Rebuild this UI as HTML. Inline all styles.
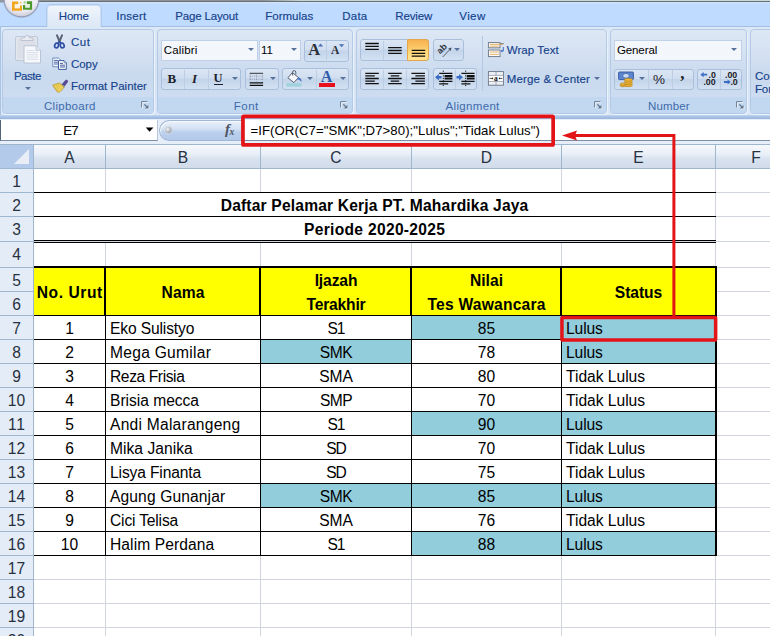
<!DOCTYPE html>
<html lang="id">
<head>
<meta charset="utf-8">
<title>Excel - Daftar Pelamar Kerja</title>
<style>
*{box-sizing:border-box;margin:0;padding:0}
html,body{width:770px;height:636px;overflow:hidden;background:#fff}
body{position:relative;font-family:"Liberation Sans",sans-serif;color:#000}
.abs{position:absolute}
#tabs{left:0;top:0;width:770px;height:27px;background:#bfdbff}
#titleline{left:36px;top:0;width:734px;height:2.4px;background:linear-gradient(rgba(0,0,0,0) 0,rgba(0,0,0,0) 60%,#66717e 72%,#66717e 100%),linear-gradient(90deg,#8f9395 0,#8f9395 31%,#c3d6cf 36%,#c9dbd3 100%)}
#titleline2{left:36px;top:2.3px;width:734px;height:2px;background:linear-gradient(#d6e5f8,#c5dcfb)}
.tab,.t,.gl,.ct{position:absolute;z-index:3;font-size:11.5px;line-height:14px;color:#15428b;white-space:nowrap}
.t,.tab{-webkit-text-stroke:0.15px #15428b}
.gl{color:#3e6aaa}
.ct{color:#000}
#hometab{left:47px;top:4.5px;width:54px;height:23px;border:1px solid #cfdff3;border-bottom:none;border-radius:4px 4px 0 0;background:linear-gradient(#eff5fc,#e2ecf8 60%,#dde8f6);z-index:2;box-shadow:0 0 0 1px rgba(160,188,225,.55);clip-path:inset(-2px -2px 0.5px -2px)}
#ribbon{left:0;top:26px;width:770px;height:90px;background:linear-gradient(#dde8f6 0,#d6e3f3 50%,#d9e6f6 100%);border-top:1px solid #a3bfe2;border-left:1px solid #a8c3e4}
#ribbonbot{left:0;top:115px;width:770px;height:4.5px;background:linear-gradient(#c3d7f0 0,#a9c3e5 35%,#93b0d9 100%)}
.grp{position:absolute;top:29px;height:85px;border:1px solid #b3c9e6;border-radius:4px;background:linear-gradient(#dde7f5 0,#d6e2f2 25%,#c9d9ee 55%,#cddcf0 80%);overflow:hidden;box-shadow:1px 1px 0 #eaf2fb}
.grp .lbl{position:absolute;left:0;right:0;bottom:0;height:16px;background:#c2d8f0;font-size:11.5px;line-height:18px;color:#3e6aaa;text-align:center;white-space:nowrap}
.btng{position:absolute;height:22px;border:1px solid #a9bfdc;border-radius:3px;background:linear-gradient(#dbe6f4 0,#d0def0 45%,#c3d4ea 50%,#d3e1f2 100%)}
.combo{position:absolute;height:21px;border:1px solid #bfd1e8;background:#f3f7fc;font-size:11.5px;line-height:19px;color:#000;white-space:nowrap}
.dd{position:absolute;width:0;height:0;border-left:3px solid transparent;border-right:3px solid transparent;border-top:3px solid #56729a}
.launch{position:absolute;width:8px;height:8px}
#fbar{left:0;top:119px;width:770px;height:26px;background:#e6eefa}
#namebox{left:0;top:119.5px;width:158px;height:21px;background:#fff;border-bottom:1px solid #7f8da3;border-right:1px solid #b7c6da;border-left:1px solid #55627a}
#finput{left:241px;top:119.5px;width:529px;height:21px;background:#fff;border-bottom:1px solid #7f8da3}
.cell{position:absolute;white-space:nowrap;font-size:15.6px;line-height:24px;color:#000}
.hd{position:absolute;font-size:15.6px;color:#25313f;text-align:center;white-space:nowrap}
.b{font-weight:bold}
</style>
</head>
<body>
<!-- ===== tab row ===== -->
<div id="tabs" class="abs"></div>
<div id="titleline" class="abs"></div>
<div id="titleline2" class="abs"></div>
<div id="hometab" class="abs"></div>
<div class="tab" style="left:58.8px;top:9px;letter-spacing:-0.20px">Home</div>
<div class="tab" style="left:116.2px;top:9px;letter-spacing:0.25px">Insert</div>
<div class="tab" style="left:175.3px;top:9px;letter-spacing:-0.17px">Page Layout</div>
<div class="tab" style="left:265.3px;top:9px;letter-spacing:-0.01px">Formulas</div>
<div class="tab" style="left:342.3px;top:9px;letter-spacing:0.20px">Data</div>
<div class="tab" style="left:395.3px;top:9px;letter-spacing:-0.16px">Review</div>
<div class="tab" style="left:459.3px;top:9px;letter-spacing:0.39px">View</div>
<!-- office button -->
<svg class="abs" style="left:0;top:0" width="44" height="22" viewBox="0 0 44 22">
 <defs>
  <radialGradient id="ob" cx="50%" cy="35%" r="65%"><stop offset="0" stop-color="#ffffff"/><stop offset="0.75" stop-color="#eceaf3"/><stop offset="1" stop-color="#c9cad9"/></radialGradient>
 </defs>
 <rect x="0" y="0" width="5" height="2.5" fill="#8f979f"/>
 <circle cx="21.4" cy="-0.5" r="18.3" fill="#8e9ab3" opacity="0.5"/>
 <circle cx="21.4" cy="-0.5" r="17.3" fill="url(#ob)" stroke="#8b94aa" stroke-width="0.9"/>
 <path d="M12 1.6h6.2v2.6h-3.4v4h5v-2.6h2.2v5.1h-10z" fill="#f3a51c"/>
 <rect x="14.8" y="4.2" width="5" height="4" fill="#fdf3dc"/>
 <circle cx="20.6" cy="2.6" r="1.1" fill="#f8cf7a"/>
 <path d="M26.8 1.3h5.3v8.4h-9.1v-4.6h2.4v2.4h4.3v-3.6h-2.9z" fill="#4c9a2c"/>
 <rect x="25.4" y="4" width="4.3" height="3.5" fill="#e6f3dc"/>
 <circle cx="24.6" cy="2.4" r="1.1" fill="#9bd077"/>
</svg>

<!-- ===== ribbon ===== -->
<div id="ribbon" class="abs"></div>
<div id="ribbonbot" class="abs"></div>

<!-- Clipboard group -->
<div class="grp" style="left:2px;width:152px"><div class="lbl"></div></div>
<!-- Font group -->
<div class="grp" style="left:157px;width:196px"><div class="lbl"></div></div>
<!-- Alignment group -->
<div class="grp" style="left:356px;width:251px"><div class="lbl"></div></div>
<!-- Number group -->
<div class="grp" style="left:610px;width:137px"><div class="lbl"></div></div>
<!-- next group -->
<div class="grp" style="left:750px;width:40px"><div class="lbl"></div></div>


<div class="gl" style="left:44.0px;top:98.6px;letter-spacing:0.28px">Clipboard</div>
<div class="gl" style="left:233.8px;top:98.6px;letter-spacing:0.49px">Font</div>
<div class="gl" style="left:445.6px;top:98.6px;letter-spacing:0.32px">Alignment</div>
<div class="gl" style="left:647.9px;top:98.6px;letter-spacing:0.18px">Number</div>
<!-- ===== Clipboard content ===== -->
<svg class="abs" style="left:13px;top:33px" width="30" height="32" viewBox="13 33 30 32">
 <rect x="15.5" y="36.5" width="22" height="24" rx="1.5" fill="#e3e6ed" stroke="#c0c9d8"/>
 <rect x="17.5" y="38.8" width="18" height="19.7" fill="#dcdfe7"/>
 <path d="M21 40.5v-2.5h3.5a2.5 2.5 0 0 1 5 0h3.5v2.5z" fill="#e9ecf2" stroke="#b3bccb" stroke-width="0.8"/>
 <path d="M24 45.8h12l4.5 4.5v12.7h-16.5z" fill="#f6f8fb" stroke="#b4bfd0" stroke-width="0.9"/>
 <path d="M36 45.8v4.5h4.5" fill="#e3e8f0" stroke="#b4bfd0" stroke-width="0.8"/>
 <g stroke="#d5dbe5" stroke-width="0.9"><path d="M26.5 50.5h8M26.5 52.7h11.5M26.5 54.9h11.5M26.5 57.1h11.5M26.5 59.3h11.5"/></g>
</svg>
<div class="t" style="left:13.9px;top:69px;letter-spacing:-0.46px">Paste</div>
<div class="dd" style="left:24.5px;top:87px"></div>
<!-- cut -->
<svg class="abs" style="left:52px;top:34px" width="16" height="16" viewBox="52 34 16 16">
 <path d="M57 35.3l3 7.2M62 35.3l-3 7.2" stroke="#5a6374" stroke-width="2" stroke-linecap="round" fill="none"/>
 <path d="M59.2 41.4l-1.7 2.2M59.6 41.4l1.7 2.2" stroke="#3553a8" stroke-width="1.7" fill="none"/>
 <ellipse cx="56.6" cy="45.5" rx="1.9" ry="2.4" transform="rotate(20 56.6 45.5)" fill="none" stroke="#2f4ea6" stroke-width="1.7"/>
 <ellipse cx="62.2" cy="45.5" rx="1.9" ry="2.4" transform="rotate(-20 62.2 45.5)" fill="none" stroke="#2f4ea6" stroke-width="1.7"/>
</svg>
<div class="t" style="left:70.9px;top:35px;letter-spacing:0.60px">Cut</div>
<!-- copy -->
<svg class="abs" style="left:51px;top:56px" width="17" height="15" viewBox="51 56 17 15">
 <path d="M52.8 58h5.7l2 2v6.7h-7.7z" fill="#fbfcfe" stroke="#5f7fb5" stroke-width="0.9"/>
 <g stroke="#3a559a" stroke-width="0.9"><path d="M54 60.4h4M54 62.2h4.2M54 64h4.2"/></g>
 <path d="M58.5 60.6h5.6l2.2 2.2v6.6h-7.8z" fill="#fbfcfe" stroke="#3d5f9f" stroke-width="1"/>
 <path d="M64.1 60.6v2.2h2.2" fill="#dfe7f4" stroke="#3d5f9f" stroke-width="0.7"/>
 <g stroke="#2f4a8f" stroke-width="0.9"><path d="M60 63.4h3M60 65.2h5M60 67h5"/></g>
</svg>
<div class="t" style="left:70.9px;top:57px;letter-spacing:0.01px">Copy</div>
<!-- format painter -->
<svg class="abs" style="left:51px;top:78px" width="18" height="16" viewBox="51 78 18 16">
 <path d="M62.2 84.2l3.3-3.8a1.3 1.3 0 0 1 2 1.6l-3 4z" fill="#5b4a9b" stroke="#3d3272" stroke-width="0.6"/>
 <path d="M61 83.6l4 3.2-1.2 1.5-4-3.2z" fill="#8a8f9c"/>
 <path d="M52.6 85.2l6.8-2.2 4.6 4.2-2.8 3.4c-1 1.2-2.4 2-3.8 1.4z" fill="#f1d45d" stroke="#b5932a" stroke-width="0.8"/>
 <path d="M53.5 85.5l4.2 5.6M55.6 84.7l3.6 5.4M57.7 84l2.8 4.6" stroke="#c9a93a" stroke-width="0.6"/>
</svg>
<div class="t" style="left:70.9px;top:79px;letter-spacing:-0.00px">Format Painter</div>
<svg class="launch" style="left:140.5px;top:100.5px;width:9px;height:9px" viewBox="0 0 9 9"><path d="M1.5 7V1.5H7" fill="none" stroke="#f2f7fc" stroke-width="1"/><path d="M0.6 6.4V0.6H6.4" fill="none" stroke="#6b7d93" stroke-width="1"/><path d="M4.3 8.2H8.2V4.3z" fill="#f2f7fc"/><path d="M3.4 3.4L6.6 6.6" stroke="#5f7186" stroke-width="1.3"/><path d="M3.9 7.5H7.5V3.9z" fill="#5f7186"/></svg>


<!-- ===== Font group content ===== -->
<div class="combo" style="left:161px;top:39.5px;width:96.5px"></div>
<div class="ct" style="left:163.7px;top:43px;letter-spacing:0.17px">Calibri</div>
<div class="dd" style="left:247.5px;top:48px"></div>
<div class="combo" style="left:258.5px;top:39.5px;width:42.5px"></div>
<div class="ct" style="left:260.9px;top:43px;letter-spacing:0.15px">11</div>
<div class="dd" style="left:290.5px;top:48px"></div>
<div class="btng" style="left:304px;top:39.5px;width:44.5px"></div>
<div class="abs" style="left:326px;top:41px;width:1px;height:19px;background:#bccde4"></div>
<div class="abs" style="left:308.3px;top:40.6px;font:bold 16.5px/17px 'Liberation Serif',serif;color:#2a2f38">A</div>
<div class="abs" style="left:331px;top:44.2px;font:bold 11.5px/13px 'Liberation Serif',serif;color:#2a2f38">A</div>
<svg class="abs" style="left:318px;top:42.5px" width="6" height="4"><polygon points="0,3.4 2.6,0.4 5.2,3.4" fill="#4b6fb0"/></svg>
<svg class="abs" style="left:339px;top:43.5px" width="6" height="4"><polygon points="0,0.3 5.2,0.3 2.6,3.3" fill="#4b6fb0"/></svg>

<div class="btng" style="left:161px;top:68px;width:80px"></div>
<div class="abs" style="left:183.5px;top:69.5px;width:1px;height:19px;background:#bccde4"></div>
<div class="abs" style="left:207.5px;top:69.5px;width:1px;height:19px;background:#bccde4"></div>
<div class="abs" style="left:167.5px;top:70px;font:bold 13px/17px 'Liberation Serif',serif;color:#1d2129">B</div>
<div class="abs" style="left:192px;top:70px;font:italic bold 13px/17px 'Liberation Serif',serif;color:#1d2129">I</div>
<div class="abs" style="left:213.5px;top:70px;font:bold 12.5px/17px 'Liberation Serif',serif;color:#1d2129;border-bottom:1.3px solid #1d2129;height:15.2px">U</div>
<div class="dd" style="left:231.5px;top:77px"></div>

<div class="btng" style="left:244.5px;top:68px;width:34.5px"></div>
<svg class="abs" style="left:249px;top:72px" width="15" height="15" viewBox="0 0 15 15">
 <path d="M0.7 1.3h13.4" stroke="#30343c" stroke-width="1"/>
 <g stroke="#8b93a3" stroke-width="0.9" stroke-dasharray="1 1.2"><path d="M0.7 4.2h13.4M0.7 7.2h13.4M1.2 2.5v7M7.4 2.5v7M13.6 2.5v7"/></g>
 <path d="M0.7 10.9h13.4M0.7 13.3h13.4" stroke="#111" stroke-width="1.3"/>
</svg>
<div class="dd" style="left:269.5px;top:77px"></div>

<div class="btng" style="left:282px;top:68px;width:66.5px"></div>
<div class="abs" style="left:315.5px;top:69.5px;width:1px;height:19px;background:#bccde4"></div>
<svg class="abs" style="left:285px;top:69px" width="20" height="19" viewBox="285 69 20 19">
 <rect x="286.3" y="83.2" width="15.2" height="3.4" fill="#9ed3dd"/>
 <path d="M292.3 72.6l6.2 5-4.6 5-6-4.8z" fill="#f4f6fa" stroke="#4a5568" stroke-width="0.9"/>
 <path d="M292.6 75.5v-3.3a1.6 1.6 0 0 1 3.2 0v2.2" fill="none" stroke="#4a5568" stroke-width="0.9"/>
 <path d="M298.3 77.4c2.2 0.2 3.3 1.8 3.2 4.6-1.4-1.6-2.2-2.6-4.6-2.8z" fill="#3f6fc0"/>
</svg>
<div class="dd" style="left:306.5px;top:77px"></div>
<div class="abs" style="left:320.7px;top:67.5px;font:bold 16px/17px 'Liberation Serif',serif;color:#2d5aa8">A</div>
<div class="abs" style="left:319px;top:83.2px;width:16px;height:3.4px;background:#e8101c"></div>
<div class="dd" style="left:339.5px;top:77px"></div>
<svg class="launch" style="left:339.5px;top:100.5px;width:9px;height:9px" viewBox="0 0 9 9"><path d="M1.5 7V1.5H7" fill="none" stroke="#f2f7fc" stroke-width="1"/><path d="M0.6 6.4V0.6H6.4" fill="none" stroke="#6b7d93" stroke-width="1"/><path d="M4.3 8.2H8.2V4.3z" fill="#f2f7fc"/><path d="M3.4 3.4L6.6 6.6" stroke="#5f7186" stroke-width="1.3"/><path d="M3.9 7.5H7.5V3.9z" fill="#5f7186"/></svg>


<!-- ===== Alignment group content ===== -->
<div class="btng" style="left:360px;top:39px;width:69px"></div>
<div class="abs" style="left:406.5px;top:39px;width:22.5px;height:22px;border:1px solid #e3a64b;border-radius:0 3px 3px 0;background:linear-gradient(#f7b250 0,#fbc566 35%,#ffd977 60%,#ffe594 100%)"></div>
<div class="abs" style="left:383px;top:40.5px;width:1px;height:19px;background:#bccde4"></div>
<div class="btng" style="left:432.5px;top:39px;width:31.5px"></div>
<div class="btng" style="left:360px;top:68px;width:69px"></div>
<div class="abs" style="left:383px;top:69.5px;width:1px;height:19px;background:#bccde4"></div>
<div class="abs" style="left:406px;top:69.5px;width:1px;height:19px;background:#bccde4"></div>
<div class="btng" style="left:432.5px;top:68px;width:44px"></div>
<div class="abs" style="left:454.5px;top:69.5px;width:1px;height:19px;background:#bccde4"></div>
<div class="abs" style="left:481.5px;top:36px;width:1px;height:55px;background:#b4c8e3"></div>
<svg class="abs" style="left:356px;top:34px" width="126" height="60" viewBox="356 34 126 60">
 <path d="M365.3 43.5h13.5M365.3 46.4h13.5M365.3 49.3h13.5" stroke="#111" stroke-width="1.3" fill="none"/>
 <path d="M388.2 47.6h13.5M388.2 50.5h13.5M388.2 53.4h13.5" stroke="#111" stroke-width="1.3" fill="none"/>
 <path d="M411.7 50.4h13.5M411.7 53.3h13.5M411.7 56.2h13.5" stroke="#111" stroke-width="1.3" fill="none"/>
 <path d="M365.3 73.3h13.5M365.3 75.9h9.5M365.3 78.5h13.5M365.3 81.1h9.5M365.3 83.7h13.5" stroke="#111" stroke-width="1.3" fill="none"/>
 <path d="M388.2 73.3h13.5M390.7 75.9h8.5M388.2 78.5h13.5M390.7 81.1h8.5M388.2 83.7h13.5" stroke="#111" stroke-width="1.3" fill="none"/>
 <path d="M411.4 73.3h13.5M415.4 75.9h9.5M411.4 78.5h13.5M415.4 81.1h9.5M411.4 83.7h13.5" stroke="#111" stroke-width="1.3" fill="none"/>
 <!-- orientation -->
 <g transform="translate(440.2 54.6) rotate(-45)"><text x="0" y="0" font-family="Liberation Sans,sans-serif" font-size="9" font-weight="bold" fill="#30343c">ab</text></g>
 <path d="M442.7 57l8-8.4" stroke="#4a5260" stroke-width="0.9" fill="none"/>
 <path d="M451.6 47.6l-3.4 0.9 2.4 2.5z" fill="#4a5260"/>
 <!-- decrease indent -->
 <path d="M439.2 73.3h13.2M439.2 81.3h13.2M439.2 83.9h9" stroke="#111" stroke-width="1.3" fill="none"/>
 <path d="M444.6 76h7.8M444.6 78.5h7.8" stroke="#111" stroke-width="1.9" fill="none"/>
 <path d="M443.3 70.6v15.4" stroke="#111" stroke-width="1" stroke-dasharray="1.2 1.2"/>
 <path d="M435 77.3l3.9-3.3v2.1h2.6v2.4h-2.6v2.1z" fill="#3b6cc4"/>
 <!-- increase indent -->
 <path d="M461.4 73.3h13.2M461.4 81.3h13.2M461.4 83.9h9" stroke="#111" stroke-width="1.3" fill="none"/>
 <path d="M466.8 76h7.8M466.8 78.5h7.8" stroke="#111" stroke-width="1.9" fill="none"/>
 <path d="M465.7 70.6v15.4" stroke="#111" stroke-width="1" stroke-dasharray="1.2 1.2"/>
 <path d="M463 77.3l-3.9-3.3v2.1h-2.6v2.4h2.6v2.1z" fill="#3b6cc4"/>
</svg>
<div class="dd" style="left:453.7px;top:48.3px"></div>
<!-- wrap text -->
<svg class="abs" style="left:487px;top:41px" width="18" height="17" viewBox="487 41 18 17">
 <rect x="488.4" y="42.6" width="11.6" height="5.2" fill="#fdfdfe" stroke="#6a7485" stroke-width="0.9"/>
 <path d="M500 43.6h3.8" stroke="#6a7485" stroke-width="0.9"/>
 <path d="M489.8 44.3h13.4" stroke="#e0a040" stroke-width="0.8"/>
 <path d="M489.8 46.1h9" stroke="#e0a040" stroke-width="0.8"/>
 <rect x="488.4" y="50" width="11.6" height="6.6" fill="#fdfdfe" stroke="#6a7485" stroke-width="0.9"/>
 <path d="M489.8 52h9M489.8 54.4h9" stroke="#e0a040" stroke-width="0.8"/>
 <path d="M503.3 47v4h-2" stroke="#3b6cc4" stroke-width="1" fill="none"/>
 <path d="M500.6 51l1.8-1.5v3z" fill="#3b6cc4"/>
</svg>
<div class="t" style="left:506.7px;top:43px;letter-spacing:0.08px">Wrap Text</div>
<!-- merge & center -->
<svg class="abs" style="left:487px;top:70px" width="18" height="17" viewBox="487 70 18 17">
 <rect x="488.4" y="71.6" width="15" height="13.6" fill="#eef1f6" stroke="#6a7485" stroke-width="0.9"/>
 <path d="M488.4 75.4h15M488.4 81.4h15M496 71.6v3.8M496 81.4v3.8" stroke="#8a93a5" stroke-width="0.8"/>
 <rect x="488.9" y="75.9" width="14" height="5" fill="#fff"/>
 <text x="493.9" y="80.7" font-family="Liberation Serif,serif" font-weight="bold" font-size="7.5" fill="#111">a</text>
 <path d="M489.6 78.4h3.2M499.2 78.4h3.2" stroke="#222" stroke-width="0.8"/>
 <path d="M493.4 78.4l-1.4-1.2v2.4zM498.6 78.4l1.4-1.2v2.4z" fill="#222"/>
</svg>
<div class="t" style="left:506.7px;top:72px;letter-spacing:0.16px">Merge &amp; Center</div>
<div class="dd" style="left:594px;top:77.3px"></div>
<svg class="launch" style="left:593.5px;top:100.5px;width:9px;height:9px" viewBox="0 0 9 9"><path d="M1.5 7V1.5H7" fill="none" stroke="#f2f7fc" stroke-width="1"/><path d="M0.6 6.4V0.6H6.4" fill="none" stroke="#6b7d93" stroke-width="1"/><path d="M4.3 8.2H8.2V4.3z" fill="#f2f7fc"/><path d="M3.4 3.4L6.6 6.6" stroke="#5f7186" stroke-width="1.3"/><path d="M3.9 7.5H7.5V3.9z" fill="#5f7186"/></svg>


<!-- ===== Number group content ===== -->
<div class="combo" style="left:614px;top:39.5px;width:128px"></div>
<div class="ct" style="left:616.9px;top:43px;letter-spacing:-0.09px">General</div>
<div class="dd" style="left:731.3px;top:48px"></div>
<div class="btng" style="left:614px;top:68.5px;width:79.5px;height:21.5px"></div>
<div class="abs" style="left:648px;top:70px;width:1px;height:18.5px;background:#bccde4"></div>
<div class="abs" style="left:671.5px;top:70px;width:1px;height:18.5px;background:#bccde4"></div>
<svg class="abs" style="left:617px;top:70px" width="18" height="18" viewBox="617 70 18 18">
 <rect x="618.6" y="72" width="14.8" height="7.6" rx="0.8" fill="#5c86cf" stroke="#2f559d" stroke-width="0.9"/>
 <ellipse cx="626" cy="75.8" rx="3.2" ry="2.3" fill="#c9dbf5" stroke="#2f559d" stroke-width="0.6"/>
 <g fill="#f0b93a" stroke="#a9761a" stroke-width="0.6">
  <ellipse cx="628.4" cy="85.2" rx="4" ry="1.5"/><ellipse cx="628.4" cy="83.4" rx="4" ry="1.5"/><ellipse cx="628.4" cy="81.6" rx="4" ry="1.5"/><ellipse cx="628.4" cy="79.8" rx="4" ry="1.5"/>
  <ellipse cx="622.8" cy="85.6" rx="2.6" ry="1.2"/><ellipse cx="622.8" cy="84.2" rx="2.6" ry="1.2"/>
 </g>
</svg>
<div class="dd" style="left:639.2px;top:77.3px"></div>
<div class="abs" style="left:653px;top:70.5px;font:13.5px/17px 'Liberation Sans',sans-serif;color:#1d2129">%</div>
<div class="abs" style="left:680.3px;top:63.5px;font:bold 17px/20px 'Liberation Serif',serif;color:#1d2129">,</div>
<div class="btng" style="left:697px;top:68.5px;width:45px;height:21.5px"></div>
<div class="abs" style="left:720px;top:70px;width:1px;height:18.5px;background:#bccde4"></div>
<svg class="abs" style="left:698px;top:70px" width="43" height="18" viewBox="698 70 43 18" font-family="Liberation Sans,sans-serif" font-weight="bold" font-size="8.8" fill="#1d2129">
 <text x="708.6" y="77.9">.0</text><text x="703.4" y="84.8">.00</text>
 <path d="M700.4 74.7l3.2-2.6v1.7h3.6v1.8h-3.6v1.7z" fill="#3b6cc4"/>
 <text x="725" y="77.9">.00</text><text x="730.4" y="84.8">.0</text>
 <path d="M730.8 82l-3.2-2.6v1.7h-3.6v1.8h3.6v1.7z" fill="#3b6cc4"/>
</svg>
<svg class="launch" style="left:735.5px;top:100.5px;width:9px;height:9px" viewBox="0 0 9 9"><path d="M1.5 7V1.5H7" fill="none" stroke="#f2f7fc" stroke-width="1"/><path d="M0.6 6.4V0.6H6.4" fill="none" stroke="#6b7d93" stroke-width="1"/><path d="M4.3 8.2H8.2V4.3z" fill="#f2f7fc"/><path d="M3.4 3.4L6.6 6.6" stroke="#5f7186" stroke-width="1.3"/><path d="M3.9 7.5H7.5V3.9z" fill="#5f7186"/></svg>
<!-- next group (clipped) -->
<div class="t" style="left:754.9px;top:69px;letter-spacing:-0.01px">Conditional</div>
<div class="t" style="left:754.9px;top:81.5px;letter-spacing:-0.06px">Formatting</div>

<!-- formula bar -->
<div id="fbar" class="abs"></div>
<div id="namebox" class="abs"></div>
<div id="finput" class="abs"></div>
<!-- name box dropdown, resize pill, fx -->
<svg class="abs" style="left:145px;top:127px" width="10" height="6"><polygon points="0.8,0.6 8.4,0.6 4.6,4.8" fill="#000"/></svg>
<div class="abs" style="left:159px;top:119.5px;width:84px;height:21px;border:1px solid #9fb6d4;border-right:none;border-radius:10.5px 0 0 10.5px;background:linear-gradient(#e9f0fa 0,#d5e2f4 40%,#b9cfec 60%,#b3cae9 100%);box-shadow:inset 1px 1px 0 #f6f9fd"></div>
<svg class="abs" style="left:163px;top:124px" width="12" height="12"><defs><radialGradient id="kn" cx="40%" cy="40%" r="60%"><stop offset="0" stop-color="#f4f5f7"/><stop offset="1" stop-color="#8f98a6"/></radialGradient></defs><circle cx="5.4" cy="6" r="3.8" fill="url(#kn)" stroke="#dfe6ef" stroke-width="0.8"/></svg>
<div class="abs" style="left:225px;top:119px;font:italic bold 15px/20px 'Liberation Serif',serif;color:#4d5462;letter-spacing:-0.6px">f<span style="font-size:9.5px;position:relative;top:0.5px">x</span></div>

<div class="abs" style="left:0;top:145px;width:770px;height:23px;background:linear-gradient(#f6f9fc 0,#e9eff7 40%,#d9e2ef 60%,#d1dbe9 100%)"></div>
<div class="abs" style="left:0;top:144px;width:770px;height:1px;background:#9eb6ce"></div>
<div class="abs" style="left:0;top:168px;width:770px;height:1px;background:#9eb6ce"></div>
<div class="abs" style="left:0;top:145px;width:33px;height:23px;background:#b4caea"></div>
<svg class="abs" style="left:0;top:145px" width="34" height="23"><polygon points="29,4 29,19 14,19" fill="#e9eef6"/></svg>
<div class="abs" style="left:0;top:169px;width:33px;height:467px;background:#e4ecf7"></div>
<div class="abs" style="left:33px;top:145px;width:1px;height:491px;background:#9eb6ce"></div>
<div class="abs" style="left:105px;top:145px;width:1px;height:23px;background:#9eb6ce"></div>
<div class="abs" style="left:260px;top:145px;width:1px;height:23px;background:#9eb6ce"></div>
<div class="abs" style="left:411px;top:145px;width:1px;height:23px;background:#9eb6ce"></div>
<div class="abs" style="left:561px;top:145px;width:1px;height:23px;background:#9eb6ce"></div>
<div class="abs" style="left:715px;top:145px;width:1px;height:23px;background:#9eb6ce"></div>
<div class="abs" style="left:34px;top:192px;width:736px;height:1px;background:#d0d4dc"></div>
<div class="abs" style="left:0;top:192px;width:33px;height:1px;background:#9eb6ce"></div>
<div class="abs" style="left:34px;top:216px;width:736px;height:1px;background:#d0d4dc"></div>
<div class="abs" style="left:0;top:216px;width:33px;height:1px;background:#9eb6ce"></div>
<div class="abs" style="left:34px;top:241px;width:736px;height:1px;background:#d0d4dc"></div>
<div class="abs" style="left:0;top:241px;width:33px;height:1px;background:#9eb6ce"></div>
<div class="abs" style="left:34px;top:267px;width:736px;height:1px;background:#d0d4dc"></div>
<div class="abs" style="left:0;top:267px;width:33px;height:1px;background:#9eb6ce"></div>
<div class="abs" style="left:34px;top:291px;width:736px;height:1px;background:#d0d4dc"></div>
<div class="abs" style="left:0;top:291px;width:33px;height:1px;background:#9eb6ce"></div>
<div class="abs" style="left:34px;top:315px;width:736px;height:1px;background:#d0d4dc"></div>
<div class="abs" style="left:0;top:315px;width:33px;height:1px;background:#9eb6ce"></div>
<div class="abs" style="left:34px;top:339px;width:736px;height:1px;background:#d0d4dc"></div>
<div class="abs" style="left:0;top:339px;width:33px;height:1px;background:#9eb6ce"></div>
<div class="abs" style="left:34px;top:363px;width:736px;height:1px;background:#d0d4dc"></div>
<div class="abs" style="left:0;top:363px;width:33px;height:1px;background:#9eb6ce"></div>
<div class="abs" style="left:34px;top:387px;width:736px;height:1px;background:#d0d4dc"></div>
<div class="abs" style="left:0;top:387px;width:33px;height:1px;background:#9eb6ce"></div>
<div class="abs" style="left:34px;top:411px;width:736px;height:1px;background:#d0d4dc"></div>
<div class="abs" style="left:0;top:411px;width:33px;height:1px;background:#9eb6ce"></div>
<div class="abs" style="left:34px;top:435px;width:736px;height:1px;background:#d0d4dc"></div>
<div class="abs" style="left:0;top:435px;width:33px;height:1px;background:#9eb6ce"></div>
<div class="abs" style="left:34px;top:459px;width:736px;height:1px;background:#d0d4dc"></div>
<div class="abs" style="left:0;top:459px;width:33px;height:1px;background:#9eb6ce"></div>
<div class="abs" style="left:34px;top:483px;width:736px;height:1px;background:#d0d4dc"></div>
<div class="abs" style="left:0;top:483px;width:33px;height:1px;background:#9eb6ce"></div>
<div class="abs" style="left:34px;top:507px;width:736px;height:1px;background:#d0d4dc"></div>
<div class="abs" style="left:0;top:507px;width:33px;height:1px;background:#9eb6ce"></div>
<div class="abs" style="left:34px;top:531px;width:736px;height:1px;background:#d0d4dc"></div>
<div class="abs" style="left:0;top:531px;width:33px;height:1px;background:#9eb6ce"></div>
<div class="abs" style="left:34px;top:555px;width:736px;height:1px;background:#d0d4dc"></div>
<div class="abs" style="left:0;top:555px;width:33px;height:1px;background:#9eb6ce"></div>
<div class="abs" style="left:34px;top:579px;width:736px;height:1px;background:#d0d4dc"></div>
<div class="abs" style="left:0;top:579px;width:33px;height:1px;background:#9eb6ce"></div>
<div class="abs" style="left:34px;top:603px;width:736px;height:1px;background:#d0d4dc"></div>
<div class="abs" style="left:0;top:603px;width:33px;height:1px;background:#9eb6ce"></div>
<div class="abs" style="left:34px;top:627px;width:736px;height:1px;background:#d0d4dc"></div>
<div class="abs" style="left:0;top:627px;width:33px;height:1px;background:#9eb6ce"></div>
<div class="abs" style="left:105px;top:169px;width:1px;height:467px;background:#d0d4dc"></div>
<div class="abs" style="left:260px;top:169px;width:1px;height:467px;background:#d0d4dc"></div>
<div class="abs" style="left:411px;top:169px;width:1px;height:467px;background:#d0d4dc"></div>
<div class="abs" style="left:561px;top:169px;width:1px;height:467px;background:#d0d4dc"></div>
<div class="abs" style="left:715px;top:169px;width:1px;height:467px;background:#d0d4dc"></div>
<div class="abs" style="left:34px;top:193px;width:681px;height:47px;background:#fff"></div>
<div class="abs" style="left:34px;top:268px;width:681px;height:47px;background:#ffff00"></div>
<div class="abs" style="left:412px;top:316px;width:149px;height:23px;background:#92cddc"></div>
<div class="abs" style="left:562px;top:316px;width:153px;height:23px;background:#92cddc"></div>
<div class="abs" style="left:261px;top:340px;width:150px;height:23px;background:#92cddc"></div>
<div class="abs" style="left:562px;top:340px;width:153px;height:23px;background:#92cddc"></div>
<div class="abs" style="left:412px;top:412px;width:149px;height:23px;background:#92cddc"></div>
<div class="abs" style="left:562px;top:412px;width:153px;height:23px;background:#92cddc"></div>
<div class="abs" style="left:261px;top:484px;width:150px;height:23px;background:#92cddc"></div>
<div class="abs" style="left:412px;top:484px;width:149px;height:23px;background:#92cddc"></div>
<div class="abs" style="left:562px;top:484px;width:153px;height:23px;background:#92cddc"></div>
<div class="abs" style="left:412px;top:532px;width:149px;height:23px;background:#92cddc"></div>
<div class="abs" style="left:562px;top:532px;width:153px;height:23px;background:#92cddc"></div>
<div class="abs" style="left:34px;top:192px;width:682px;height:1px;background:#000"></div>
<div class="abs" style="left:34px;top:216px;width:682px;height:1px;background:#000"></div>
<div class="abs" style="left:34px;top:240px;width:682px;height:1px;background:#000"></div>
<div class="abs" style="left:34px;top:242px;width:682px;height:1px;background:#000"></div>
<div class="abs" style="left:34px;top:266px;width:683px;height:2px;background:#000"></div>
<div class="abs" style="left:34px;top:315px;width:683px;height:1px;background:#000"></div>
<div class="abs" style="left:34px;top:339px;width:683px;height:1px;background:#000"></div>
<div class="abs" style="left:34px;top:363px;width:683px;height:1px;background:#000"></div>
<div class="abs" style="left:34px;top:387px;width:683px;height:1px;background:#000"></div>
<div class="abs" style="left:34px;top:411px;width:683px;height:1px;background:#000"></div>
<div class="abs" style="left:34px;top:435px;width:683px;height:1px;background:#000"></div>
<div class="abs" style="left:34px;top:459px;width:683px;height:1px;background:#000"></div>
<div class="abs" style="left:34px;top:483px;width:683px;height:1px;background:#000"></div>
<div class="abs" style="left:34px;top:507px;width:683px;height:1px;background:#000"></div>
<div class="abs" style="left:34px;top:531px;width:683px;height:1px;background:#000"></div>
<div class="abs" style="left:34px;top:555px;width:683px;height:1px;background:#000"></div>
<div class="abs" style="left:104px;top:266px;width:2px;height:50px;background:#000"></div>
<div class="abs" style="left:259px;top:266px;width:2px;height:50px;background:#000"></div>
<div class="abs" style="left:410px;top:266px;width:2px;height:50px;background:#000"></div>
<div class="abs" style="left:560px;top:266px;width:2px;height:50px;background:#000"></div>
<div class="abs" style="left:715px;top:266px;width:2px;height:50px;background:#000"></div>
<div class="abs" style="left:105px;top:316px;width:1px;height:240px;background:#000"></div>
<div class="abs" style="left:260px;top:316px;width:1px;height:240px;background:#000"></div>
<div class="abs" style="left:411px;top:316px;width:1px;height:240px;background:#000"></div>
<div class="abs" style="left:561px;top:316px;width:1px;height:240px;background:#000"></div>
<div class="abs" style="left:715px;top:316px;width:2px;height:240px;background:#000"></div>
<div class="cell" style="top:146px;font-size:15.6px;color:#27313f;left:34px;width:71px;text-align:center;">A</div>
<div class="cell" style="top:146px;font-size:15.6px;color:#27313f;left:106px;width:154px;text-align:center;">B</div>
<div class="cell" style="top:146px;font-size:15.6px;color:#27313f;left:261px;width:150px;text-align:center;">C</div>
<div class="cell" style="top:146px;font-size:15.6px;color:#27313f;left:412px;width:149px;text-align:center;">D</div>
<div class="cell" style="top:146px;font-size:15.6px;color:#27313f;left:562px;width:153px;text-align:center;">E</div>
<div class="cell" style="top:146px;font-size:15.6px;color:#27313f;left:716px;width:80px;text-align:center;">F</div>
<div class="cell" style="top:170px;font-size:15.6px;color:#27313f;left:0px;width:33px;text-align:center;">1</div>
<div class="cell" style="top:194px;font-size:15.6px;color:#27313f;left:0px;width:33px;text-align:center;">2</div>
<div class="cell" style="top:218px;font-size:15.6px;color:#27313f;left:0px;width:33px;text-align:center;">3</div>
<div class="cell" style="top:243px;font-size:15.6px;color:#27313f;left:0px;width:33px;text-align:center;">4</div>
<div class="cell" style="top:269px;font-size:15.6px;color:#27313f;left:0px;width:33px;text-align:center;">5</div>
<div class="cell" style="top:293px;font-size:15.6px;color:#27313f;left:0px;width:33px;text-align:center;">6</div>
<div class="cell" style="top:317px;font-size:15.6px;color:#27313f;left:0px;width:33px;text-align:center;">7</div>
<div class="cell" style="top:341px;font-size:15.6px;color:#27313f;left:0px;width:33px;text-align:center;">8</div>
<div class="cell" style="top:365px;font-size:15.6px;color:#27313f;left:0px;width:33px;text-align:center;">9</div>
<div class="cell" style="top:389px;font-size:15.6px;letter-spacing:0.24px;color:#27313f;left:0px;width:33px;text-align:center;padding-left:0.24px;">10</div>
<div class="cell" style="top:413px;font-size:15.6px;letter-spacing:0.83px;color:#27313f;left:0px;width:33px;text-align:center;padding-left:0.83px;">11</div>
<div class="cell" style="top:437px;font-size:15.6px;letter-spacing:0.24px;color:#27313f;left:0px;width:33px;text-align:center;padding-left:0.24px;">12</div>
<div class="cell" style="top:461px;font-size:15.6px;letter-spacing:0.24px;color:#27313f;left:0px;width:33px;text-align:center;padding-left:0.24px;">13</div>
<div class="cell" style="top:485px;font-size:15.6px;letter-spacing:0.24px;color:#27313f;left:0px;width:33px;text-align:center;padding-left:0.24px;">14</div>
<div class="cell" style="top:509px;font-size:15.6px;letter-spacing:0.24px;color:#27313f;left:0px;width:33px;text-align:center;padding-left:0.24px;">15</div>
<div class="cell" style="top:533px;font-size:15.6px;letter-spacing:0.24px;color:#27313f;left:0px;width:33px;text-align:center;padding-left:0.24px;">16</div>
<div class="cell" style="top:557px;font-size:15.6px;letter-spacing:0.24px;color:#27313f;left:0px;width:33px;text-align:center;padding-left:0.24px;">17</div>
<div class="cell" style="top:581px;font-size:15.6px;letter-spacing:0.24px;color:#27313f;left:0px;width:33px;text-align:center;padding-left:0.24px;">18</div>
<div class="cell" style="top:605px;font-size:15.6px;letter-spacing:0.24px;color:#27313f;left:0px;width:33px;text-align:center;padding-left:0.24px;">19</div>
<div class="cell" style="top:629px;font-size:15.6px;letter-spacing:0.24px;color:#27313f;left:0px;width:33px;text-align:center;padding-left:0.24px;">20</div>
<div class="cell" style="top:194px;font-size:15.6px;letter-spacing:0.18px;font-weight:bold;left:34px;width:681px;text-align:center;padding-left:0.18px;">Daftar Pelamar Kerja PT. Mahardika Jaya</div>
<div class="cell" style="top:218px;font-size:15.6px;letter-spacing:0.3px;font-weight:bold;left:34px;width:681px;text-align:center;padding-left:0.3px;">Periode 2020-2025</div>
<div class="cell" style="top:281px;font-size:15.6px;letter-spacing:0.56px;font-weight:bold;left:34px;width:71px;text-align:center;padding-left:0.56px;">No. Urut</div>
<div class="cell" style="top:281px;font-size:15.6px;letter-spacing:0.2px;font-weight:bold;left:106px;width:154px;text-align:center;padding-left:0.2px;">Nama</div>
<div class="cell" style="top:269px;font-size:15.6px;letter-spacing:-0.1px;font-weight:bold;left:261px;width:150px;text-align:center;padding-left:-0.1px;">Ijazah</div>
<div class="cell" style="top:293px;font-size:15.6px;letter-spacing:-0.17px;font-weight:bold;left:261px;width:150px;text-align:center;padding-left:-0.17px;">Terakhir</div>
<div class="cell" style="top:269px;font-size:15.6px;letter-spacing:0.06px;font-weight:bold;left:412px;width:149px;text-align:center;padding-left:0.06px;">Nilai</div>
<div class="cell" style="top:293px;font-size:15.6px;letter-spacing:0.22px;font-weight:bold;left:412px;width:149px;text-align:center;padding-left:0.22px;">Tes Wawancara</div>
<div class="cell" style="top:281px;font-size:15.6px;letter-spacing:-0.05px;font-weight:bold;left:562px;width:153px;text-align:center;padding-left:-0.05px;">Status</div>
<div class="cell" style="top:317px;font-size:15.6px;left:34px;width:71px;text-align:center;">1</div>
<div class="cell" style="top:317px;font-size:15.6px;letter-spacing:-0.13px;left:110px;">Eko Sulistyo</div>
<div class="cell" style="top:317px;font-size:15.6px;letter-spacing:-1.03px;left:261px;width:150px;text-align:center;padding-left:-1.03px;">S1</div>
<div class="cell" style="top:317px;font-size:15.6px;letter-spacing:0.24px;left:412px;width:149px;text-align:center;padding-left:0.24px;">85</div>
<div class="cell" style="top:317px;font-size:15.6px;letter-spacing:-0.09px;left:566px;">Lulus</div>
<div class="cell" style="top:341px;font-size:15.6px;left:34px;width:71px;text-align:center;">2</div>
<div class="cell" style="top:341px;font-size:15.6px;letter-spacing:0.27px;left:110px;">Mega Gumilar</div>
<div class="cell" style="top:341px;font-size:15.6px;letter-spacing:-0.51px;left:261px;width:150px;text-align:center;padding-left:-0.51px;">SMK</div>
<div class="cell" style="top:341px;font-size:15.6px;letter-spacing:0.24px;left:412px;width:149px;text-align:center;padding-left:0.24px;">78</div>
<div class="cell" style="top:341px;font-size:15.6px;letter-spacing:-0.09px;left:566px;">Lulus</div>
<div class="cell" style="top:365px;font-size:15.6px;left:34px;width:71px;text-align:center;">3</div>
<div class="cell" style="top:365px;font-size:15.6px;letter-spacing:-0.4px;left:110px;">Reza Frisia</div>
<div class="cell" style="top:365px;font-size:15.6px;letter-spacing:-0.16px;left:261px;width:150px;text-align:center;padding-left:-0.16px;">SMA</div>
<div class="cell" style="top:365px;font-size:15.6px;letter-spacing:0.24px;left:412px;width:149px;text-align:center;padding-left:0.24px;">80</div>
<div class="cell" style="top:365px;font-size:15.6px;letter-spacing:-0.01px;left:566px;">Tidak Lulus</div>
<div class="cell" style="top:389px;font-size:15.6px;left:34px;width:71px;text-align:center;">4</div>
<div class="cell" style="top:389px;font-size:15.6px;letter-spacing:-0.02px;left:110px;">Brisia mecca</div>
<div class="cell" style="top:389px;font-size:15.6px;letter-spacing:-0.53px;left:261px;width:150px;text-align:center;padding-left:-0.53px;">SMP</div>
<div class="cell" style="top:389px;font-size:15.6px;letter-spacing:0.24px;left:412px;width:149px;text-align:center;padding-left:0.24px;">70</div>
<div class="cell" style="top:389px;font-size:15.6px;letter-spacing:-0.01px;left:566px;">Tidak Lulus</div>
<div class="cell" style="top:413px;font-size:15.6px;left:34px;width:71px;text-align:center;">5</div>
<div class="cell" style="top:413px;font-size:15.6px;letter-spacing:0.24px;left:110px;">Andi Malarangeng</div>
<div class="cell" style="top:413px;font-size:15.6px;letter-spacing:-1.03px;left:261px;width:150px;text-align:center;padding-left:-1.03px;">S1</div>
<div class="cell" style="top:413px;font-size:15.6px;letter-spacing:0.24px;left:412px;width:149px;text-align:center;padding-left:0.24px;">90</div>
<div class="cell" style="top:413px;font-size:15.6px;letter-spacing:-0.09px;left:566px;">Lulus</div>
<div class="cell" style="top:437px;font-size:15.6px;left:34px;width:71px;text-align:center;">6</div>
<div class="cell" style="top:437px;font-size:15.6px;letter-spacing:0.03px;left:110px;">Mika Janika</div>
<div class="cell" style="top:437px;font-size:15.6px;letter-spacing:-1.2px;left:261px;width:150px;text-align:center;padding-left:-1.2px;">SD</div>
<div class="cell" style="top:437px;font-size:15.6px;letter-spacing:0.24px;left:412px;width:149px;text-align:center;padding-left:0.24px;">70</div>
<div class="cell" style="top:437px;font-size:15.6px;letter-spacing:-0.01px;left:566px;">Tidak Lulus</div>
<div class="cell" style="top:461px;font-size:15.6px;left:34px;width:71px;text-align:center;">7</div>
<div class="cell" style="top:461px;font-size:15.6px;letter-spacing:-0.13px;left:110px;">Lisya Finanta</div>
<div class="cell" style="top:461px;font-size:15.6px;letter-spacing:-1.2px;left:261px;width:150px;text-align:center;padding-left:-1.2px;">SD</div>
<div class="cell" style="top:461px;font-size:15.6px;letter-spacing:0.24px;left:412px;width:149px;text-align:center;padding-left:0.24px;">75</div>
<div class="cell" style="top:461px;font-size:15.6px;letter-spacing:-0.01px;left:566px;">Tidak Lulus</div>
<div class="cell" style="top:485px;font-size:15.6px;left:34px;width:71px;text-align:center;">8</div>
<div class="cell" style="top:485px;font-size:15.6px;letter-spacing:0.12px;left:110px;">Agung Gunanjar</div>
<div class="cell" style="top:485px;font-size:15.6px;letter-spacing:-0.51px;left:261px;width:150px;text-align:center;padding-left:-0.51px;">SMK</div>
<div class="cell" style="top:485px;font-size:15.6px;letter-spacing:0.24px;left:412px;width:149px;text-align:center;padding-left:0.24px;">85</div>
<div class="cell" style="top:485px;font-size:15.6px;letter-spacing:-0.09px;left:566px;">Lulus</div>
<div class="cell" style="top:509px;font-size:15.6px;left:34px;width:71px;text-align:center;">9</div>
<div class="cell" style="top:509px;font-size:15.6px;letter-spacing:-0.17px;left:110px;">Cici Telisa</div>
<div class="cell" style="top:509px;font-size:15.6px;letter-spacing:-0.16px;left:261px;width:150px;text-align:center;padding-left:-0.16px;">SMA</div>
<div class="cell" style="top:509px;font-size:15.6px;letter-spacing:0.24px;left:412px;width:149px;text-align:center;padding-left:0.24px;">76</div>
<div class="cell" style="top:509px;font-size:15.6px;letter-spacing:-0.01px;left:566px;">Tidak Lulus</div>
<div class="cell" style="top:533px;font-size:15.6px;letter-spacing:0.24px;left:34px;width:71px;text-align:center;padding-left:0.24px;">10</div>
<div class="cell" style="top:533px;font-size:15.6px;letter-spacing:0.08px;left:110px;">Halim Perdana</div>
<div class="cell" style="top:533px;font-size:15.6px;letter-spacing:-1.03px;left:261px;width:150px;text-align:center;padding-left:-1.03px;">S1</div>
<div class="cell" style="top:533px;font-size:15.6px;letter-spacing:0.24px;left:412px;width:149px;text-align:center;padding-left:0.24px;">88</div>
<div class="cell" style="top:533px;font-size:15.6px;letter-spacing:-0.09px;left:566px;">Lulus</div>
<div class="cell" style="top:119px;font-size:13.2px;letter-spacing:-0.77px;left:0px;width:141px;text-align:center;padding-left:-0.77px;">E7</div>
<div class="cell" style="top:119px;font-size:13.2px;letter-spacing:0.06px;left:250.5px;">=IF(OR(C7="SMK";D7&gt;80);"Lulus";"Tidak Lulus")</div>

<svg class="abs" style="left:236px;top:110px" width="490" height="240" viewBox="236 110 490 240">
 <rect x="242.95" y="116.45" width="310.2" height="28.5" rx="0.8" fill="none" stroke="#e31418" stroke-width="3.7"/>
 <rect x="561.95" y="317.5" width="153.7" height="22.5" rx="0.8" fill="none" stroke="#e31418" stroke-width="3.5"/>
</svg>
<svg class="abs" style="left:555px;top:125px" width="130" height="195" viewBox="555 125 130 195">
 <polyline points="574,135.5 673.9,135.5 673.9,317" fill="none" stroke="#e31418" stroke-width="3"/>
 <polygon points="562,135.5 577,130.5 575,135.5 577,140.5" fill="#e31418"/>
</svg>

</body>
</html>
